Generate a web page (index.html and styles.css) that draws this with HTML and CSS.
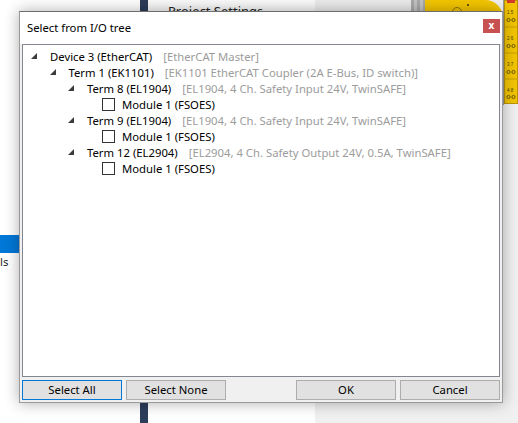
FILE: index.html
```html
<!DOCTYPE html>
<html lang="en">
<head>
  <meta charset="UTF-8">
  <meta name="viewport" content="width=device-width, initial-scale=1.0">
  <title>Select from I/O tree</title>
  <link rel="stylesheet" href="styles.css">
</head>
<body>
  <!-- the editor behind the dialog -->
  <div class="desk">
    <div class="side">
      <div class="side-sel"></div>
      <div class="side-item">ls</div>
    </div>
    <div class="navy"></div>
    <div class="middle">
      <div class="middle-head">Project Settings</div>
    </div>
    <div class="right">
      <div class="right-top">
        <div class="grey-area"></div>
        <div class="strip"></div>
        <div class="yellow-block"><span class="dot"></span><span class="ring"></span></div>
        <div class="gap"></div>
        <svg class="terminal" width="14" height="105" viewBox="0 0 14 105">
          <rect x="0.5" y="0.5" width="13" height="103" fill="#f2c400" stroke="#b99300"/>
          <rect x="3" y="0" width="8" height="3" fill="#d23a2a"/>
          <line x1="0" y1="27" x2="14" y2="27" stroke="#c9a000"/>
          <line x1="0" y1="53" x2="14" y2="53" stroke="#c9a000"/>
          <line x1="0" y1="79" x2="14" y2="79" stroke="#c9a000"/>
          <text x="3" y="14" class="tlabel">1 5</text>
          <text x="3" y="40" class="tlabel">2 6</text>
          <text x="3" y="66" class="tlabel">3 7</text>
          <text x="3" y="92" class="tlabel">4 8</text>
          <circle cx="4.5" cy="20" r="1.6" fill="none" stroke="#6b5a00"/>
          <circle cx="9.5" cy="20" r="1.6" fill="none" stroke="#6b5a00"/>
          <circle cx="4.5" cy="46" r="1.6" fill="none" stroke="#6b5a00"/>
          <circle cx="9.5" cy="46" r="1.6" fill="none" stroke="#6b5a00"/>
          <circle cx="4.5" cy="72" r="1.6" fill="none" stroke="#6b5a00"/>
          <circle cx="9.5" cy="72" r="1.6" fill="none" stroke="#6b5a00"/>
          <circle cx="4.5" cy="97" r="1.6" fill="none" stroke="#6b5a00"/>
          <circle cx="9.5" cy="97" r="1.6" fill="none" stroke="#6b5a00"/>
        </svg>
      </div>
    </div>
  </div>

  <div class="dialog">
    <div class="titlebar">
      <span class="title">Select from I/O tree</span>
      <span class="close">x</span>
    </div>
    <div class="dialog-body">
      <div class="tree">
        <div class="row l0">
          <span class="exp"><svg width="6" height="6" viewBox="0 0 6 6"><polygon points="6,0 6,6 0,6"/></svg></span>
          <span class="name">Device 3 (EtherCAT)</span><span class="desc">[EtherCAT Master]</span>
        </div>
        <div class="row l1">
          <span class="exp"><svg width="6" height="6" viewBox="0 0 6 6"><polygon points="6,0 6,6 0,6"/></svg></span>
          <span class="name">Term 1 (EK1101)</span><span class="desc">[EK1101 EtherCAT Coupler (2A E-Bus, ID switch)]</span>
        </div>
        <div class="row l2">
          <span class="exp"><svg width="6" height="6" viewBox="0 0 6 6"><polygon points="6,0 6,6 0,6"/></svg></span>
          <span class="name">Term 8 (EL1904)</span><span class="desc">[EL1904, 4 Ch. Safety Input 24V, TwinSAFE]</span>
        </div>
        <div class="row mod">
          <span class="check"></span><span class="name">Module 1 (FSOES)</span>
        </div>
        <div class="row l2">
          <span class="exp"><svg width="6" height="6" viewBox="0 0 6 6"><polygon points="6,0 6,6 0,6"/></svg></span>
          <span class="name">Term 9 (EL1904)</span><span class="desc">[EL1904, 4 Ch. Safety Input 24V, TwinSAFE]</span>
        </div>
        <div class="row mod">
          <span class="check"></span><span class="name">Module 1 (FSOES)</span>
        </div>
        <div class="row l2">
          <span class="exp"><svg width="6" height="6" viewBox="0 0 6 6"><polygon points="6,0 6,6 0,6"/></svg></span>
          <span class="name">Term 12 (EL2904)</span><span class="desc">[EL2904, 4 Ch. Safety Output 24V, 0.5A, TwinSAFE]</span>
        </div>
        <div class="row mod">
          <span class="check"></span><span class="name">Module 1 (FSOES)</span>
        </div>
      </div>
      <div class="buttons">
        <div class="btn focus">Select All</div>
        <div class="btn">Select None</div>
        <div class="spacer"></div>
        <div class="btn">OK</div>
        <div class="btn">Cancel</div>
      </div>
    </div>
  </div>
</body>
</html>
```

FILE: styles.css
```css
/* page = one screen of the editor */
body {
  margin: 0;
  width: 518px;
  height: 423px;
  overflow: hidden;
  position: relative;
  background: #fff;
  font-family: "Noto Sans", "Open Sans", sans-serif;
  color: #000;
}

/* background editor */
.desk {
  display: flex;
  height: 423px;
}

.side {
  width: 140px;
  background: #fff;
}

.side-sel {
  margin-top: 235px;
  height: 18px;
  background: #0078d7;
}

.side-item {
  height: 18px;
  font-size: 11.3px;
  line-height: 18px;
  color: #1e1e1e;
}

.navy {
  width: 8px;
  background: #2d3c5a;
}

.middle {
  width: 167px;
  background: #fff;
}

.middle-head {
  height: 34px;
  padding: 2px 0 0 20px;
  box-sizing: border-box;
  font-size: 13px;
  color: #222;
  background: linear-gradient(#fbfbfb, #ececec);
}

.right {
  flex: 1;
  background: #f0f0f0;
}

.right-top {
  display: flex;
  height: 105px;
}

.grey-area {
  width: 96px;
  background: linear-gradient(#ececec, #e2e2e2);
}

.strip {
  width: 14px;
  background: repeating-linear-gradient(90deg, #a9a9a9 0 3px, #c4c4c4 3px 6px);
}

.yellow-block {
  width: 78px;
  height: 30px;
  position: relative;
  background: #f4c600;
  border-top-right-radius: 18px;
}

.dot {
  position: absolute;
  left: 42px;
  top: 4px;
  width: 2px;
  height: 2px;
  background: #6b5800;
}

.ring {
  position: absolute;
  left: 27px;
  top: 7px;
  width: 8px;
  height: 8px;
  border: 1px solid #8a7200;
  border-radius: 50%;
}

.gap {
  width: 1px;
  background: #9a9a9a;
}

.terminal {
  display: block;
}

.tlabel {
  font-size: 4.5px;
  fill: #4a3f00;
  font-family: "Liberation Sans", sans-serif;
}

/* dialog window */
.dialog {
  position: absolute;
  left: 19px;
  top: 11px;
  width: 484px;
  height: 392px;
  box-sizing: border-box;
  border: 1px solid #9a9a9a;
  border-top-color: #6e6e6e;
  box-shadow: 0 0 14px rgba(0, 0, 0, 0.32);
  display: flex;
  flex-direction: column;
  background: #f0f0f0;
}

.titlebar {
  height: 32px;
  background: #fff;
  display: flex;
  justify-content: space-between;
  align-items: center;
  padding-left: 7px;
  font-size: 11.3px;
}

.title {
  padding-bottom: 2px;
}

.close {
  align-self: flex-start;
  margin: 7px 2px 0 0;
  width: 17px;
  height: 14px;
  background: #c75050;
  color: #fff;
  font-size: 10px;
  font-weight: bold;
  line-height: 13px;
  text-align: center;
}

.dialog-body {
  flex: 1;
  padding: 0 2px 2px;
  display: flex;
  flex-direction: column;
}

.tree {
  height: 333px;
  box-sizing: border-box;
  border: 1px solid #828790;
  background: #fff;
  padding-top: 3px;
}

.row {
  height: 16px;
  display: flex;
  align-items: center;
  white-space: nowrap;
  font-size: 11.3px;
}

.l0 { padding-left: 8px; }
.l1 { padding-left: 26.5px; }
.l2 { padding-left: 45px; }
.mod { padding-left: 79px; }

.exp {
  width: 19px;
  flex: none;
}

.exp svg {
  display: block;
  fill: #3c3c3c;
}

.check {
  width: 13px;
  height: 13px;
  box-sizing: border-box;
  border: 1px solid #333;
  background: #fff;
  margin-right: 7px;
  flex: none;
}

.desc {
  margin-left: 11px;
  color: #9c9c9c;
}

.buttons {
  display: flex;
  gap: 4px;
  margin-top: 3px;
}

.spacer {
  flex: 1;
}

.btn {
  width: 100px;
  height: 20px;
  box-sizing: border-box;
  border: 1px solid #adadad;
  background: #e1e1e1;
  font-size: 11.3px;
  line-height: 18px;
  text-align: center;
}

.btn.focus {
  border-color: #0078d7;
}
```
